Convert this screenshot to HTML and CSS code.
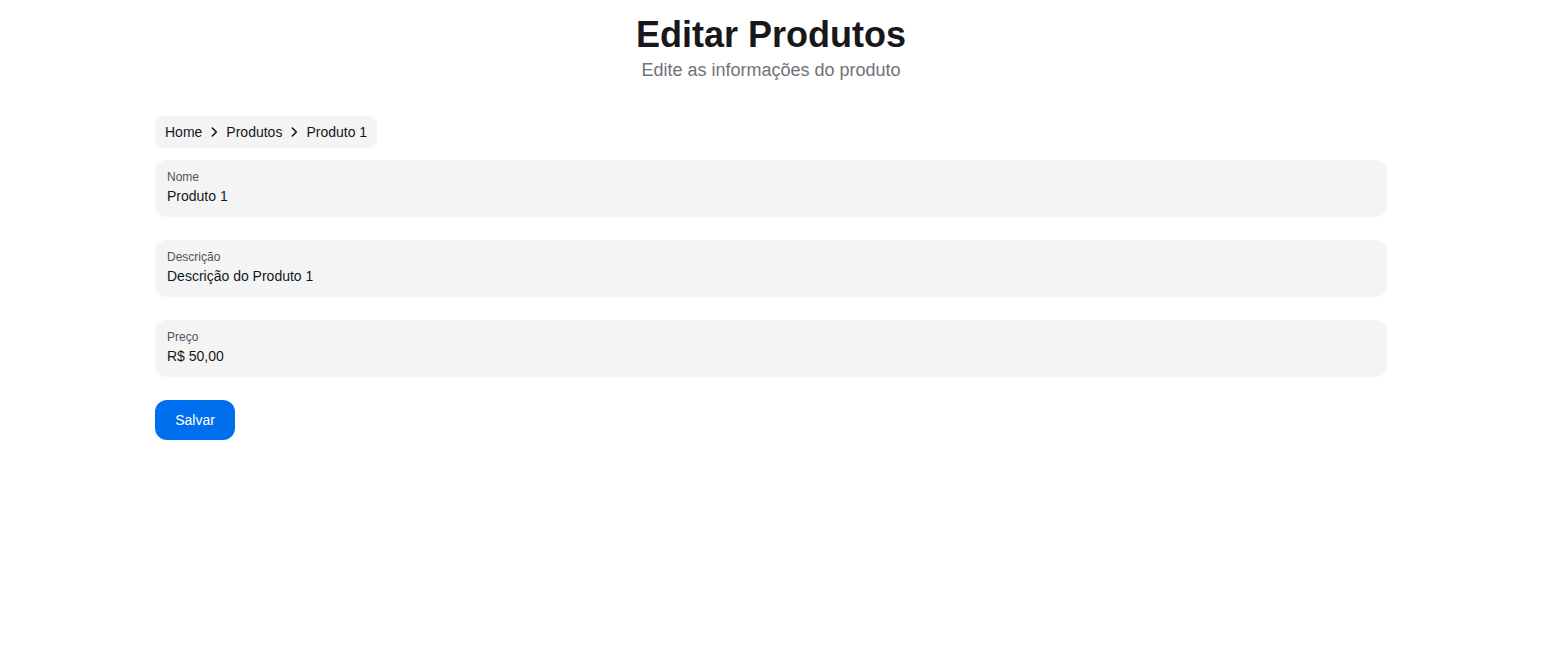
FILE: index.html
```html
<!DOCTYPE html>
<html lang="pt-BR">
<head>
<meta charset="utf-8">
<title>Editar Produtos</title>
<link rel="stylesheet" href="styles.css">
</head>
<body>
<div class="page">
  <header class="header">
    <h1 class="title">Editar Produtos</h1>
    <p class="subtitle">Edite as informações do produto</p>
  </header>
  <main class="container">
    <nav class="breadcrumb">
      <span class="crumb">Home</span>
      <svg class="sep" viewBox="0 0 24 24" width="16" height="16"><path d="M9.5 6l6 6-6 6" fill="none" stroke="currentColor" stroke-width="2.4" stroke-linecap="round" stroke-linejoin="round"/></svg>
      <span class="crumb">Produtos</span>
      <svg class="sep" viewBox="0 0 24 24" width="16" height="16"><path d="M9.5 6l6 6-6 6" fill="none" stroke="currentColor" stroke-width="2.4" stroke-linecap="round" stroke-linejoin="round"/></svg>
      <span class="crumb">Produto 1</span>
    </nav>
    <form class="form">
      <label class="field">
        <span class="label">Nome</span>
        <input class="input" type="text" value="Produto 1">
      </label>
      <label class="field">
        <span class="label">Descrição</span>
        <input class="input" type="text" value="Descrição do Produto 1">
      </label>
      <label class="field">
        <span class="label">Preço</span>
        <input class="input" type="text" value="R$ 50,00">
      </label>
      <div class="actions">
        <button class="btn" type="button">Salvar</button>
      </div>
    </form>
  </main>
</div>
</body>
</html>
```
FILE: styles.css
```css
* { box-sizing: border-box; }
html, body { margin: 0; padding: 0; background: #fff; }
body {
  font-family: "Liberation Sans", Arial, sans-serif;
  color: #11181c;
}
.page {
  width: 1542px;
}
.header {
  display: flex;
  flex-direction: column;
  align-items: center;
  padding-top: 15px;
}
.title {
  margin: 0;
  font-size: 36px;
  line-height: 40px;
  font-weight: 700;
  color: #18181b;
}
.subtitle {
  margin: 1px 0 0;
  font-size: 18px;
  line-height: 28px;
  color: #71717a;
}
.container {
  max-width: 1280px;
  margin: 32px auto 0;
  padding: 0 24px;
}
.breadcrumb {
  display: inline-flex;
  align-items: center;
  gap: 4px;
  height: 32px;
  padding: 0 10px;
  background: #f4f4f5;
  border-radius: 8px;
  font-size: 14px;
  color: #11181c;
}
.sep { color: #11181c; }
.form {
  display: flex;
  flex-direction: column;
  gap: 24px;
  margin-top: 12px;
}
.field {
  display: flex;
  flex-direction: column;
  justify-content: center;
  height: 56px;
  padding: 0 12px;
  background: #f4f4f5;
  border-radius: 12px;
  box-shadow: 0 1px 2px rgba(0,0,0,0.05);
}
.label {
  font-size: 12px;
  line-height: 16px;
  color: #52525b;
  margin-top: -1px;
}
.input {
  border: 0;
  outline: 0;
  background: transparent;
  padding: 0;
  margin-top: 1px;
  font-family: inherit;
  font-size: 14px;
  line-height: 20px;
  color: #11181c;
}
.actions { display: flex; }
.btn {
  height: 40px;
  min-width: 80px;
  padding: 0 16px;
  border: 0;
  border-radius: 12px;
  background: #006fee;
  color: #fff;
  font-family: inherit;
  font-size: 14px;
}
```
